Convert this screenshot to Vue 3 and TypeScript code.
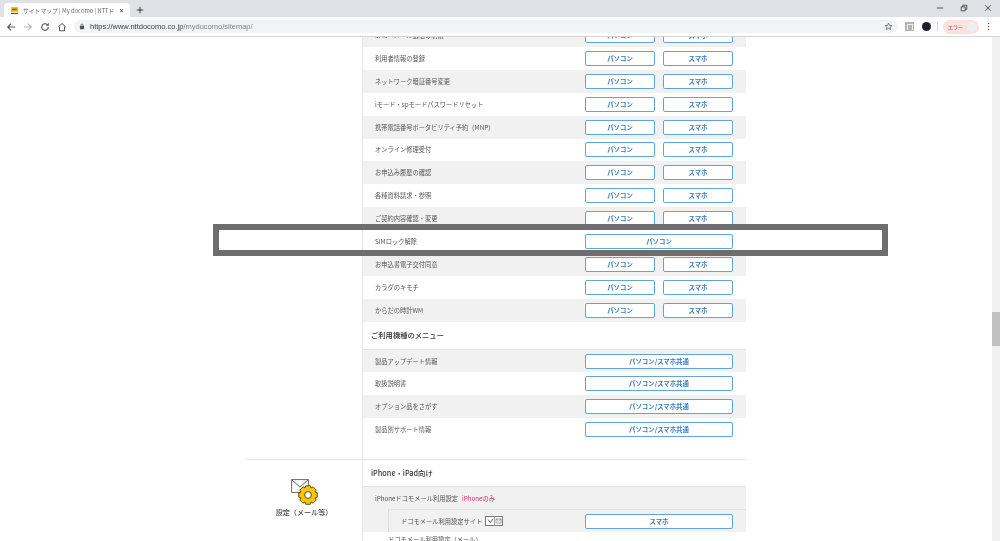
<script setup lang="ts">
interface Row {
  label: string
  sp?: boolean
}

const topRows: Row[] = [
  { label: 'SMS・メール送信の制限', sp: true },
  { label: '利用者情報の登録', sp: true },
  { label: 'ネットワーク暗証番号変更', sp: true },
  { label: 'iモード・spモードパスワードリセット', sp: true },
  { label: '携帯電話番号ポータビリティ予約（MNP）', sp: true },
  { label: 'オンライン修理受付', sp: true },
  { label: 'お申込み履歴の確認', sp: true },
  { label: '各種資料請求・参照', sp: true },
  { label: 'ご契約内容確認・変更', sp: true },
  { label: 'SIMロック解除' },
  { label: 'お申込書電子交付同意', sp: true },
  { label: 'カラダのキモチ', sp: true },
  { label: 'からだの時計WM', sp: true }
]

const deviceRows: Row[] = [
  { label: '製品アップデート情報' },
  { label: '取扱説明書' },
  { label: 'オプション品をさがす' },
  { label: '製品別サポート情報' }
]

// gear outline: 8 teeth round the centre
function gearPath(cx: number, cy: number, outer: number, inner: number): string {
  const pts: string[] = []
  for (let i = 0; i < 8; i++) {
    const a = (i * Math.PI) / 4
    const steps: [number, number][] = [
      [inner, a - 0.39],
      [outer, a - 0.24],
      [outer, a + 0.24],
      [inner, a + 0.39]
    ]
    for (const [r, t] of steps) {
      pts.push(`${(cx + r * Math.sin(t)).toFixed(2)} ${(cy - r * Math.cos(t)).toFixed(2)}`)
    }
  }
  return `M${pts.join('L')}Z`
}

const gear = gearPath(17, 16, 9.6, 7.6)
</script>

<template>
  <div class="window">
    <header class="chrome">
      <div class="tabstrip">
        <div class="tab">
          <svg class="favicon" viewBox="0 0 10 10">
            <rect x="1" y="1" width="8" height="6" rx="1" fill="#f2c200" />
            <rect x="2.5" y="3" width="5" height="1.5" fill="#7a5c00" />
            <rect x="1" y="8" width="8" height="1" fill="#333" />
          </svg>
          <span class="tab-title">サイトマップ | My docomo | NTTド</span>
          <span class="tab-close">✕</span>
        </div>
        <svg class="new-tab" viewBox="0 0 10 10">
          <path d="M5 1v8M1 5h8" stroke="#333" stroke-width="1.2" />
        </svg>
        <div class="win-controls">
          <svg viewBox="0 0 10 10"><path d="M1 5h8" stroke="#333" /></svg>
          <svg viewBox="0 0 10 10"><path d="M1.5 3.5h5v5h-5zM3.5 3.5v-2h5v5h-2" fill="none" stroke="#333" /></svg>
          <svg viewBox="0 0 10 10"><path d="M1.5 1.5l7 7M8.5 1.5l-7 7" stroke="#333" /></svg>
        </div>
      </div>
      <div class="toolbar">
        <svg class="tool" viewBox="0 0 12 12"><path d="M11 6H2M6 2L2 6l4 4" fill="none" stroke="#555" stroke-width="1.3" /></svg>
        <svg class="tool" viewBox="0 0 12 12"><path d="M1 6h9M6 2l4 4-4 4" fill="none" stroke="#b4b6b9" stroke-width="1.3" /></svg>
        <svg class="tool" viewBox="0 0 12 12"><path d="M10 6a4 4 0 1 1-1.2-2.8" fill="none" stroke="#555" stroke-width="1.3" /><path d="M10.5 1v3.4H7z" fill="#555" /></svg>
        <svg class="tool" viewBox="0 0 12 12"><path d="M1.5 6L6 1.8 10.500 6M3 5.500V10.500h6V5.500" fill="none" stroke="#555" stroke-width="1.2" /></svg>
        <div class="omnibox">
          <svg class="lock" viewBox="0 0 8 10"><rect x="1" y="4" width="6" height="5" rx="1" fill="#555" /><path d="M2.500 4V3a1.500 1.500 0 0 1 3 0v1" fill="none" stroke="#555" /></svg>
          <span class="url"><b>https://www.nttdocomo.co.jp</b>/mydocomo/sitemap/</span>
          <svg class="star" viewBox="0 0 12 12"><path d="M6 1.500l1.300 3 3.200.3-2.400 2.100.7 3.100L6 8.400 3.200 10l.7-3.100L1.500 4.800l3.200-.3z" fill="none" stroke="#555" /></svg>
        </div>
        <div class="ext-a"><span></span></div>
        <div class="ext-b"></div>
        <div class="divider"></div>
        <div class="profile">
          <span>エラー</span>
          <i></i>
        </div>
        <svg class="dots" viewBox="0 0 4 12"><circle cx="2" cy="2" r="1" fill="#555" /><circle cx="2" cy="6" r="1" fill="#555" /><circle cx="2" cy="10" r="1" fill="#555" /></svg>
      </div>
    </header>

    <div class="viewport">
      <main class="sitemap">
        <div class="group">
          <div class="side"></div>
          <div class="content">
            <div class="rows rows-top">
              <div v-for="row in topRows" :key="row.label" class="row">
                <span class="label">{{ row.label }}</span>
                <div class="links">
                  <a v-if="row.sp" class="btn">パソコン</a>
                  <a v-if="row.sp" class="btn">スマホ</a>
                  <a v-if="!row.sp" class="btn wide">パソコン</a>
                </div>
              </div>
            </div>
            <h3 class="heading heading-device">ご利用機種のメニュー</h3>
            <div class="rows rows-device">
              <div v-for="row in deviceRows" :key="row.label" class="row">
                <span class="label">{{ row.label }}</span>
                <div class="links">
                  <a class="btn wide">パソコン/スマホ共通</a>
                </div>
              </div>
            </div>
          </div>
        </div>
        <div class="group group-mail">
          <div class="side side-mail">
            <svg class="mail-icon" viewBox="0 0 28 26">
              <path d="M.6.6h16.800v12.800H.6z" fill="#fff" stroke="#666" stroke-width="1" />
              <path d="M.6.6l8.400 7.400L17.400.6" fill="none" stroke="#666" stroke-width="1" />
              <path :d="gear" fill="#f6c50f" stroke="#5c4a00" stroke-width=".9" stroke-linejoin="round" />
              <circle cx="17" cy="16" r="3.400" fill="#fff" stroke="#5c4a00" stroke-width="1" />
            </svg>
            <span class="side-label">設定（メール等）</span>
          </div>
          <div class="content">
            <h3 class="heading heading-iphone">iPhone・iPad向け</h3>
            <div class="mail-row">
              <span class="label">iPhoneドコモメール利用設定</span>
              <span class="only">iPhoneのみ</span>
            </div>
            <div class="mail-sub">
              <div class="sub-inner">
                <span class="label">ドコモメール利用設定サイト</span>
                <svg class="mini" viewBox="0 0 18 10">
                  <rect x=".5" y=".5" width="17" height="9" fill="#fff" stroke="#777" />
                  <path d="M3 3.500l2.500 3L8 2.500" fill="none" stroke="#666" />
                  <path d="M9.500.5v9" stroke="#aaa" />
                  <rect x="11" y="3" width="5" height="4" fill="none" stroke="#777" stroke-width=".7" />
                  <path d="M11 3l2.500 2L16 3" fill="none" stroke="#777" stroke-width=".6" />
                </svg>
                <div class="links">
                  <a class="btn wide">スマホ</a>
                </div>
              </div>
            </div>
            <div class="clipped-row">ドコモメール利用設定（メール）</div>
          </div>
        </div>
      </main>
      <div class="scrollbar">
        <div class="thumb"></div>
      </div>
    </div>

    <div class="highlight"></div>
  </div>
</template>

<style>
html,
body {
  margin: 0;
  height: 100%;
  overflow: hidden;
  background: #fff;
}
</style>

<style scoped>
.window {
  position: relative;
  width: 1000px;
  height: 541px;
  display: flex;
  flex-direction: column;
  overflow: hidden;
  font-family: "Noto Sans CJK JP", "Liberation Sans", sans-serif;
  color: #555;
}

.chrome {
  position: relative;
  z-index: 2;
  flex: none;
  height: 37px;
  background: #fff;
  border-bottom: 1px solid #d4d4d4;
  box-sizing: border-box;
  filter: blur(0.4px);
}

.tabstrip {
  display: flex;
  align-items: flex-end;
  height: 17px;
  padding-left: 4px;
  background: #dee1e6;
}

.tab {
  display: flex;
  align-items: center;
  width: 126px;
  height: 14px;
  padding: 0 6px 0 6px;
  box-sizing: border-box;
  background: #fff;
  border-radius: 4px 4px 0 0;
}

.favicon {
  width: 9px;
  height: 9px;
  flex: none;
}

.tab-title {
  margin-left: 4px;
  white-space: nowrap;
  font-size: 5.800px;
  color: #666;
}

.tab-close {
  margin-left: auto;
  font-size: 6px;
  color: #444;
}

.new-tab {
  width: 8px;
  height: 8px;
  margin: 0 0 3px 6px;
}

.win-controls {
  display: flex;
  gap: 16px;
  margin-left: auto;
  padding: 0 8px 5px 0;
}

.win-controls svg {
  width: 8px;
  height: 8px;
}

.toolbar {
  display: flex;
  align-items: center;
  height: 19px;
  padding-left: 6px;
}

.tool {
  width: 10px;
  height: 10px;
  margin-right: 7px;
  flex: none;
}

.omnibox {
  display: flex;
  align-items: center;
  width: 824px;
  height: 13px;
  padding: 0 5px;
  box-sizing: border-box;
  background: #f1f3f4;
  border-radius: 7px;
}

.lock {
  width: 6px;
  height: 7px;
}

.url {
  margin-left: 5px;
  font-family: "Liberation Sans", sans-serif;
  font-size: 7.500px;
  color: #80868b;
}

.url b {
  font-weight: 400;
  color: #3c4043;
}

.star {
  width: 9px;
  height: 9px;
  margin-left: auto;
}

.ext-a {
  display: flex;
  justify-content: center;
  align-items: center;
  width: 9px;
  height: 9px;
  margin-left: 7px;
  background: #b5b5b5;
}

.ext-a span {
  width: 4px;
  height: 5px;
  border: 1px solid #eee;
  border-bottom: none;
}

.ext-b {
  width: 9px;
  height: 9px;
  margin-left: 8px;
  background: #1e1e28;
  border-radius: 50%;
}

.divider {
  width: 1px;
  height: 9px;
  margin-left: 6px;
  background: #d6d6d6;
}

.profile {
  display: flex;
  align-items: center;
  justify-content: space-between;
  width: 36px;
  height: 14px;
  margin-left: 5px;
  padding: 0 2px 0 5px;
  box-sizing: border-box;
  background: #fbe2e0;
  border-radius: 7px;
  font-size: 5px;
  color: #c5413a;
}

.profile i {
  width: 10px;
  height: 10px;
  background: #eee;
  border-radius: 50%;
}

.dots {
  width: 3px;
  height: 9px;
  margin-left: 8px;
}

.viewport {
  position: relative;
  flex: 1;
  overflow: hidden;
}

.sitemap {
  width: 500px;
  margin: -13px 0 0 246px;
  filter: blur(0.4px);
}

.group {
  display: flex;
}

.group-mail {
  border-top: 1px solid #e6e6e6;
}

.side {
  flex: none;
  width: 116px;
}

.side-mail {
  display: flex;
  flex-direction: column;
  align-items: center;
  padding-top: 19px;
  box-sizing: border-box;
}

.mail-icon {
  display: block;
  width: 28px;
  height: 26px;
  margin-left: 1px;
}

.side-label {
  margin-top: 2px;
  font-size: 7.100px;
  font-weight: 500;
  color: #444;
}

.content {
  flex: 1;
  border-left: 1px solid #e8e8e8;
}

.rows-device {
  padding-bottom: 19px;
  border-top: 1px solid #e4e4e4;
}

.row {
  display: flex;
  align-items: center;
  height: 22.920px;
  padding-left: 12px;
  box-sizing: border-box;
}

.rows-top .row:nth-child(odd),
.rows-device .row:nth-child(odd) {
  background: #f1f1f1;
}

.rows-device .row {
  height: 22.670px;
}

.label {
  font-size: 6.250px;
  white-space: nowrap;
}

.links {
  display: flex;
  gap: 8px;
  margin-left: auto;
  margin-right: 13px;
}

.btn {
  display: flex;
  align-items: center;
  justify-content: center;
  width: 70px;
  height: 15px;
  box-sizing: border-box;
  background: #fff;
  border: 1px solid #5fa5dc;
  border-radius: 2px;
  font-size: 6.400px;
  font-weight: 700;
  color: #3a7bbd;
}

.btn.wide {
  width: 148px;
}

.heading {
  margin: 0;
  display: flex;
  align-items: center;
  padding-left: 8px;
  font-size: 7.300px;
  font-weight: 500;
  color: #333;
}

.heading-device {
  height: 27px;
}

.heading-iphone {
  height: 26px;
}

.mail-row {
  display: flex;
  align-items: center;
  height: 23px;
  padding-left: 12px;
  background: #f1f1f1;
  border-top: 1px solid #e4e4e4;
  box-sizing: border-box;
}

.only {
  margin-left: 4px;
  font-size: 6.250px;
  color: #d6336c;
}

.mail-sub {
  padding-left: 25px;
  background: #f1f1f1;
}

.sub-inner {
  display: flex;
  align-items: center;
  height: 23px;
  padding-left: 12px;
  box-sizing: border-box;
  border-top: 1px solid #e4e4e4;
  border-left: 1px solid #dcdcdc;
}

.mini {
  width: 18px;
  height: 10px;
  margin-left: 3px;
}

.clipped-row {
  height: 23px;
  padding: 4px 0 0 25px;
  font-size: 6.250px;
  line-height: 8px;
}

.scrollbar {
  position: absolute;
  top: 0;
  right: 0;
  bottom: 0;
  width: 8px;
  background: #f1f1f1;
}

.thumb {
  position: absolute;
  top: 275px;
  left: 0;
  right: 0;
  height: 34px;
  background: #c1c1c1;
}

.highlight {
  position: absolute;
  left: 213px;
  top: 224px;
  width: 675px;
  height: 32px;
  box-sizing: border-box;
  border: 6px solid #6e6e6e;
}
</style>
